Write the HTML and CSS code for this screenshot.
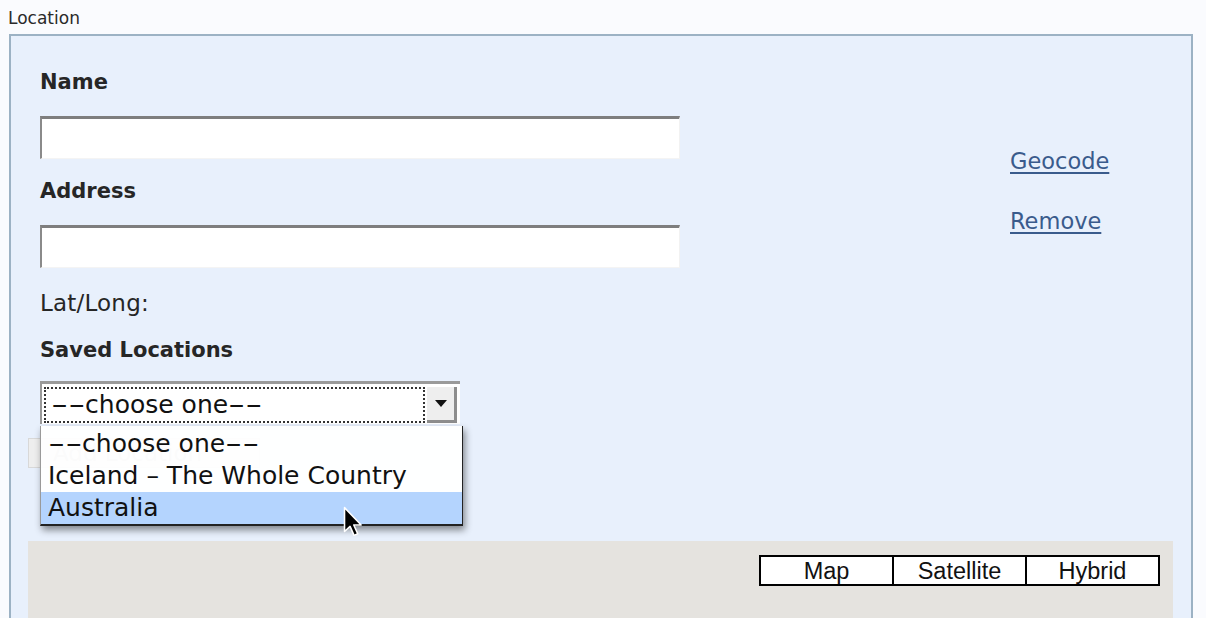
FILE: index.html
```html
<!DOCTYPE html>
<html>
<head>
<meta charset="utf-8">
<link rel="stylesheet" href="styles.css">
</head>
<body>
<div class="legend">Location</div>
<div class="fieldset">
  <div class="top">
    <div class="form">
      <div class="label bold first">Name</div>
      <div class="input"></div>
      <div class="label bold">Address</div>
      <div class="input"></div>
      <div class="label plain">Lat/Long:</div>
      <div class="label bold saved">Saved Locations</div>
      <div class="select-wrap">
        <div class="select">
          <div class="focus"><span class="dash">--</span>choose one<span class="dash">--</span></div>
          <div class="arrow"><span class="tri"></span></div>
        </div>
        <div class="button">Add Location</div>
        <div class="menu">
          <div class="opt"><span class="dash">--</span>choose one<span class="dash">--</span></div>
          <div class="opt">Iceland – The Whole Country</div>
          <div class="opt sel">Australia</div>
        </div>
        <svg class="cursor" width="20" height="31" viewBox="0 0 13 20"><path d="M1 1 L1 16.5 L4.6 13.2 L7.2 19 L9.6 18 L7 12.3 L11.8 12.3 Z" fill="#000" stroke="#fff" stroke-width="1" stroke-linejoin="round"/></svg>
      </div>
    </div>
    <div class="links">
      <a href="#" class="link">Geocode</a>
      <a href="#" class="link">Remove</a>
    </div>
  </div>
  <div class="map">
    <div class="maptypes">
      <div class="mt">Map</div>
      <div class="mt">Satellite</div>
      <div class="mt">Hybrid</div>
    </div>
  </div>
</div>
</body>
</html>
```
FILE: styles.css
```css
html, body {
  margin: 0;
  padding: 0;
}
body {
  background: #fafbfe;
  font-family: "DejaVu Sans", Verdana, sans-serif;
  color: #1e1e1e;
  width: 1206px;
  height: 618px;
  overflow: hidden;
}
.legend {
  font-size: 17px;
  line-height: 20px;
  padding: 8px 0 0 8px;
  height: 26px;
  box-sizing: border-box;
  color: #2a2a2a;
}
.fieldset {
  margin: 8px 0 0 9px;
  width: 1184px;
  height: 640px;
  box-sizing: border-box;
  border: 2px solid #9cb2c4;
  border-bottom: none;
  background: #e8f0fc;
}
.top {
  display: flex;
  padding-left: 29px;
}
.form {
  width: 640px;
  display: flex;
  flex-direction: column;
}
.label {
  line-height: 26px;
  color: #262626;
}
.bold {
  font-weight: bold;
  font-size: 21px;
  margin-top: 19px;
}
.first {
  margin-top: 33px;
}
.plain {
  font-size: 23px;
  line-height: 28px;
  margin-top: 21px;
  letter-spacing: 0.2px;
}
.saved {
  margin-top: 20px;
}
.input {
  margin-top: 21px;
  height: 43px;
  width: 640px;
  box-sizing: border-box;
  background: #fff;
  border-top: 3px solid #7e7e7e;
  border-left: 2px solid #8a8a8a;
  border-right: 1px solid #f2f2f2;
  border-bottom: 1px solid #f4f4f4;
}
.select-wrap {
  position: relative;
  margin-top: 18px;
}
.select {
  width: 420px;
  height: 43px;
  box-sizing: border-box;
  background: #fff;
  border-top: 3px solid #9a9a9a;
  border-left: 2px solid #9a9a9a;
  display: flex;
  align-items: stretch;
  padding: 3px 3px 1px 2px;
}
.focus {
  flex: 1;
  border: 2px dotted #333;
  font-size: 25px;
  line-height: 32px;
  padding-left: 5px;
  color: #111;
  white-space: nowrap;
}
.dash {
  display: inline-block;
  transform: scaleX(1.9);
  transform-origin: left center;
  margin-right: 16px;
}
.arrow {
  width: 30px;
  margin-left: 2px;
  box-sizing: border-box;
  background: #eeeeee;
  border-right: 3px solid #8d8d8d;
  border-bottom: 3px solid #8d8d8d;
  display: flex;
  align-items: center;
  justify-content: center;
}
.tri {
  width: 0;
  height: 0;
  border-left: 6px solid transparent;
  border-right: 6px solid transparent;
  border-top: 7px solid #111;
}
.button {
  margin: 14px 0 0 -12px;
  width: 232px;
  height: 30px;
  box-sizing: border-box;
  background: #eeeeee;
  border: 1px solid #d8d8d8;
  color: #b0b0b0;
  font-size: 23px;
  line-height: 28px;
  padding-left: 24px;
}
.menu {
  position: absolute;
  left: 0;
  top: 45px;
  width: 423px;
  padding-top: 2px;
  background: rgba(255, 255, 255, 0.94);
  border-left: 1px solid #9a9a9a;
  border-right: 1px solid #222;
  border-bottom: 2px solid #222;
  box-shadow: 2px 4px 7px rgba(0, 0, 0, 0.45);
  box-sizing: border-box;
}
.opt {
  font-size: 25px;
  line-height: 32px;
  height: 32px;
  padding-left: 7px;
  color: #111;
  white-space: nowrap;
}
.opt.sel {
  background: #b4d4fe;
}
.cursor {
  position: absolute;
  left: 303px;
  top: 125px;
}
.links {
  margin-left: 330px;
  padding-top: 111px;
  display: flex;
  flex-direction: column;
  gap: 32px;
}
.link {
  font-size: 22.5px;
  line-height: 28px;
  color: #3a5b8c;
  text-decoration: underline;
  text-underline-offset: 3px;
}
.map {
  margin: 73px 0 0 17px;
  width: 1145px;
  height: 120px;
  background: #e5e3df;
  display: flex;
  justify-content: flex-end;
  align-items: flex-start;
  padding: 14px 13px 0 0;
  box-sizing: border-box;
}
.maptypes {
  display: flex;
  border: 2px solid #000;
  background: #fff;
}
.mt {
  width: 131px;
  height: 27px;
  line-height: 28px;
  text-align: center;
  font-family: "Liberation Sans", Arial, sans-serif;
  font-size: 23.5px;
  color: #111;
}
.mt + .mt {
  border-left: 2px solid #000;
}
```
